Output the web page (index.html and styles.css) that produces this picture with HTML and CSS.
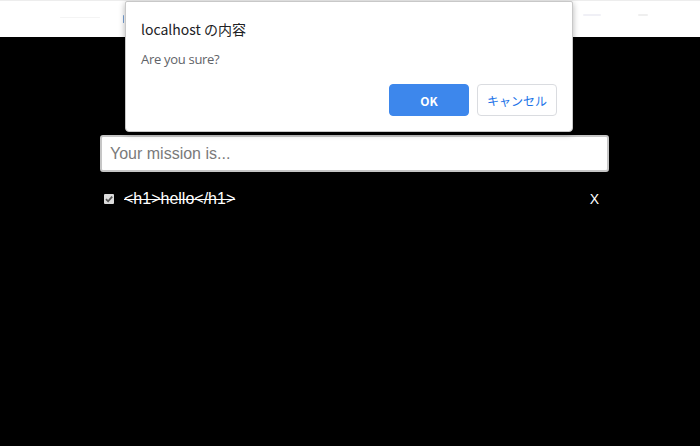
FILE: index.html
```html
<!DOCTYPE html>
<html lang="ja">
<head>
<meta charset="utf-8">
<link rel="stylesheet" href="styles.css">
<title>Todo</title>
</head>
<body>
<header class="topbar">
  <span class="smudge s1"></span>
  <span class="smudge s2"></span>
  <span class="smudge s3"></span>
  <span class="smudge s4"></span>
</header>
<main class="app">
  <input class="mission" type="text" placeholder="Your mission is...">
  <ul class="list">
    <li class="item">
      <span class="check"><svg width="10" height="10" viewBox="0 0 10 10"><path d="M2 5.2 L4.1 7.3 L8.2 2.6" fill="none" stroke="#555" stroke-width="1.8"/></svg></span>
      <span class="label">&lt;h1&gt;hello&lt;/h1&gt;</span>
      <span class="remove">X</span>
    </li>
  </ul>
</main>
<div class="dialog">
  <div class="dialog-title">localhost の内容</div>
  <div class="dialog-msg">Are you sure?</div>
  <div class="dialog-actions">
    <button class="btn btn-ok">OK</button>
    <button class="btn btn-cancel">キャンセル</button>
  </div>
</div>
</body>
</html>
```
FILE: styles.css
```css
html, body {
  margin: 0;
  padding: 0;
  background: #000;
  height: 100%;
}
body {
  font-family: "Liberation Sans", Arial, sans-serif;
  position: relative;
  overflow: hidden;
}
.topbar {
  height: 37px;
  background: #fff;
  border-top: 1px solid #ededed;
  box-sizing: border-box;
  position: relative;
}
.smudge {
  position: absolute;
  display: block;
  border-radius: 1px;
}
.s1 { left: 60px; top: 16px; width: 40px; height: 1px; background: #f4f4f4; }
.s2 { left: 123px; top: 14px; width: 1px; height: 8px; background: #7aa3d8; }
.s3 { left: 583px; top: 13px; width: 18px; height: 2px; background: #f0f0f6; }
.s4 { left: 638px; top: 13px; width: 10px; height: 2px; background: #efefef; border-radius: 4px; }
.app {
  width: 509px;
  margin-left: 100px;
  padding-top: 98px;
}
.mission {
  display: block;
  width: 100%;
  height: 37px;
  box-sizing: border-box;
  border: 2px solid #c6c6c6;
  border-radius: 3px;
  background: #fff;
  padding: 0 8px;
  font-family: "Liberation Sans", Arial, sans-serif;
  font-size: 16px;
  color: #333;
  outline: none;
}
.mission::placeholder {
  color: #7a7a7a;
}
.list {
  list-style: none;
  margin: 0;
  padding: 20px 0 0 0;
}
.item {
  display: flex;
  align-items: center;
  height: 14px;
  padding-left: 4px;
}
.check {
  width: 10px;
  height: 10px;
  background: #dcdcdc;
  border-radius: 1px;
  display: flex;
  align-items: center;
  justify-content: center;
  flex-shrink: 0;
}
.label {
  margin-left: 10px;
  color: #fff;
  font-size: 16px;
  text-decoration: line-through;
  flex: 1;
}
.remove {
  color: #fff;
  font-size: 14px;
  margin-right: 10px;
}
.dialog {
  position: absolute;
  left: 125px;
  top: 1px;
  width: 448px;
  height: 131px;
  box-sizing: border-box;
  background: #fff;
  border: 1px solid #c8c8c8;
  border-radius: 2px 2px 4px 4px;
  box-shadow: 0 2px 6px rgba(0,0,0,0.3);
  font-family: "Noto Sans CJK JP", "Noto Sans", sans-serif;
  padding: 17px 15px 0 15px;
}
.dialog-title {
  font-size: 14px;
  color: #202124;
  line-height: 20px;
}
.dialog-msg {
  font-size: 13px;
  letter-spacing: -0.3px;
  color: #5f6368;
  margin-top: 12px;
  line-height: 16px;
  font-family: "Open Sans", "Noto Sans", sans-serif;
}
.dialog-actions {
  display: flex;
  justify-content: flex-end;
  gap: 8px;
  margin-top: 17px;
}
.btn {
  width: 80px;
  height: 32px;
  box-sizing: border-box;
  border-radius: 4px;
  font-size: 12px;
  font-family: "Noto Sans CJK JP", "Noto Sans", sans-serif;
  cursor: pointer;
}
.btn-ok {
  background: #3d87ec;
  border: 1px solid #3d87ec;
  color: #fff;
  font-weight: bold;
}
.btn-cancel {
  background: #fff;
  border: 1px solid #dadce0;
  color: #1a73e8;
}
```
